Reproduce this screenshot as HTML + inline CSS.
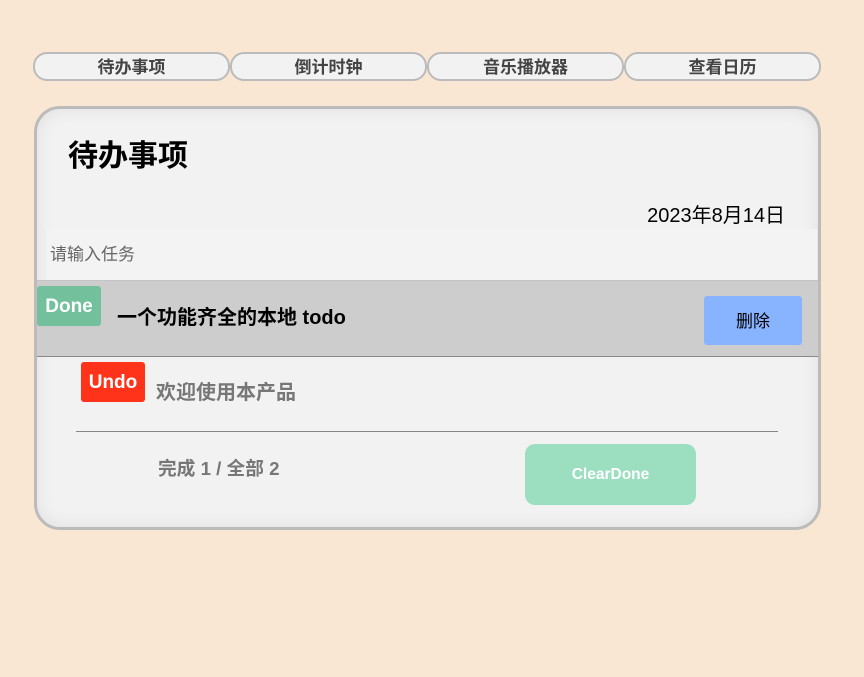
<!DOCTYPE html>
<html><head><meta charset="utf-8"><style>
*{margin:0;padding:0;box-sizing:border-box}
body{width:864px;height:677px;background:#f9e7d3;font-family:"Liberation Sans","Noto Sans CJK SC",sans-serif;position:relative;overflow:hidden}
.a{position:absolute;white-space:nowrap}
.nav{top:52px;height:29px;width:197px;border:2px solid #bbb;border-radius:14px;background:#f2f2f2;color:#444;font-weight:bold;font-size:17px;text-align:center;line-height:27px}
.card{left:34px;top:106px;width:787px;height:424px;border:3px solid #bbb;border-radius:26px;background:#f2f2f2;box-shadow:inset 0 0 18px rgba(0,0,0,0.08);overflow:hidden}
</style></head><body>
<div class="a nav" style="left:33px">待办事项</div>
<div class="a nav" style="left:230px">倒计时钟</div>
<div class="a nav" style="left:427px">音乐播放器</div>
<div class="a nav" style="left:624px">查看日历</div>
<div class="a card"></div>
<div class="a" style="left:68px;top:138px;font-size:30px;font-weight:bold;line-height:38px">待办事项</div>
<div class="a" style="left:585px;width:200px;top:203px;font-size:20px;text-align:right;line-height:26px">2023年8月14日</div>
<div class="a" style="left:47px;top:229px;width:770px;height:51px;background:#f3f3f3"></div>
<div class="a" style="left:50px;top:243px;font-size:17px;color:#666;line-height:24px">请输入任务</div>
<div class="a" style="left:37px;top:280px;width:781px;height:77px;background:#cdcdcd;border-top:1px solid #c4c4c4;border-bottom:1px solid #888"></div>
<div class="a" style="left:37px;top:286px;width:64px;height:40px;background:#72c09c;border-radius:3px;color:#fff;font-weight:bold;font-size:19px;text-align:center;line-height:42px">Done</div>
<div class="a" style="left:117px;top:305px;font-size:20px;font-weight:bold;line-height:26px">一个功能齐全的本地 todo</div>
<div class="a" style="left:704px;top:296px;width:98px;height:49px;background:#88b4ff;border-radius:3px;font-size:17px;text-align:center;line-height:51px">删除</div>
<div class="a" style="left:81px;top:362px;width:64px;height:40px;background:#ff3319;border-radius:3px;color:#fff;font-weight:bold;font-size:19px;text-align:center;line-height:42px">Undo</div>
<div class="a" style="left:156px;top:380px;font-size:20px;font-weight:bold;color:#777;line-height:26px">欢迎使用本产品</div>
<div class="a" style="left:76px;top:431px;width:702px;height:1px;background:#888"></div>
<div class="a" style="left:158px;top:457px;font-size:18.7px;font-weight:bold;color:#777;line-height:24px">完成 1 / 全部 2</div>
<div class="a" style="left:525px;top:444px;width:171px;height:61px;background:#9cdfc0;border-radius:10px;color:#fff;font-weight:bold;font-size:15.5px;text-align:center;line-height:61px">ClearDone</div>
</body></html>
